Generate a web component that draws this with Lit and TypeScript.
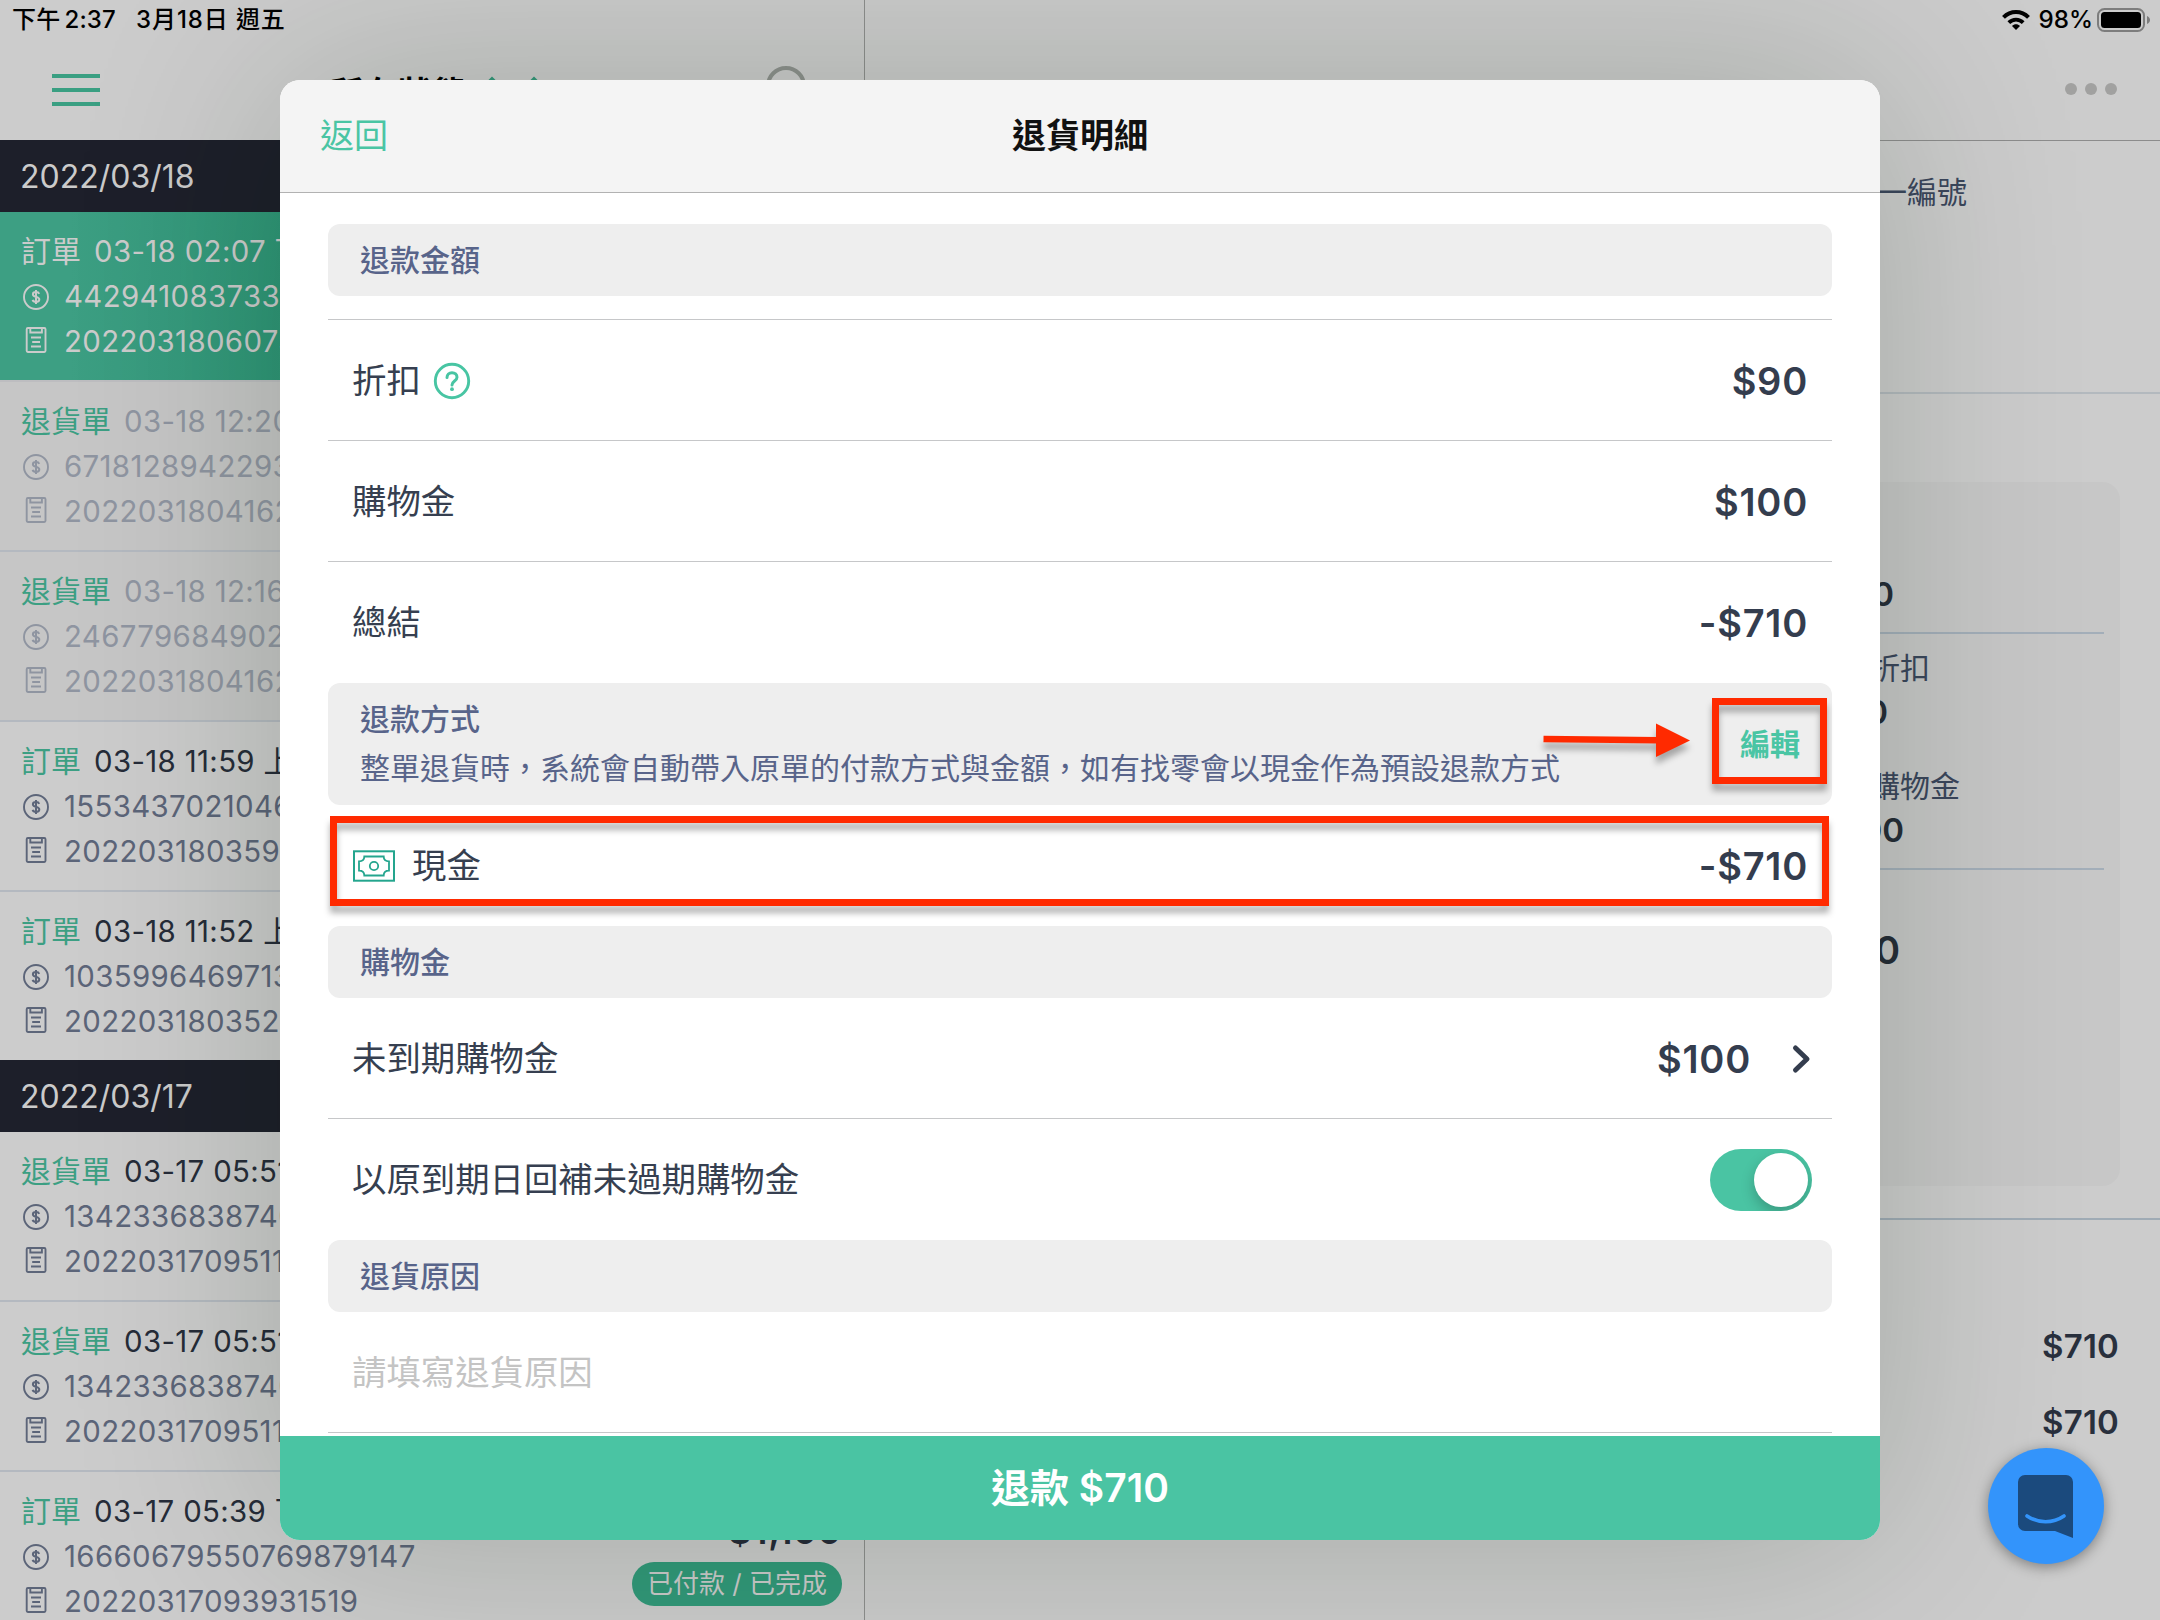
import { LitElement, html, css, nothing } from "lit";
import { customElement } from "lit/decorators.js";
import { classMap } from "lit/directives/class-map.js";

interface Order {
  kind: string;
  time: string;
  serial: string;
  invoice: string;
  state?: "selected" | "void";
  total?: string;
  badge?: string;
}

const groups: { date: string; orders: Order[] }[] = [
  {
    date: "2022/03/18",
    orders: [
      { kind: "訂單", time: "03-18 02:07 下午", serial: "442941083733", invoice: "2022031806073", state: "selected" },
      { kind: "退貨單", time: "03-18 12:20", serial: "6718128942293", invoice: "2022031804162", state: "void" },
      { kind: "退貨單", time: "03-18 12:16", serial: "246779684902", invoice: "2022031804162", state: "void" },
      { kind: "訂單", time: "03-18 11:59 上午", serial: "1553437021046", invoice: "2022031803595" },
      { kind: "訂單", time: "03-18 11:52 上午", serial: "1035996469713", invoice: "2022031803520" },
    ],
  },
  {
    date: "2022/03/17",
    orders: [
      { kind: "退貨單", time: "03-17 05:51", serial: "1342336838740", invoice: "2022031709511" },
      { kind: "退貨單", time: "03-17 05:51", serial: "1342336838740", invoice: "2022031709511" },
      {
        kind: "訂單", time: "03-17 05:39 下午", serial: "16660679550769879147", invoice: "20220317093931519",
        total: "$1,100", badge: "已付款 / 已完成",
      },
    ],
  },
];

const coinIcon = html`<svg class="ico" viewBox="0 0 30 30" width="30" height="30" fill="none" stroke="currentColor">
  <circle cx="15" cy="15" r="12" stroke-width="1.9" />
  <path d="M18.2 11.8c-.4-1.1-1.600-1.700-3.200-1.700-1.900 0-3.100.9-3.100 2.300 0 3.300 6.400 1.700 6.400 5 0 1.500-1.300 2.400-3.300 2.400-1.800 0-3-.7-3.400-1.900M15 8v14" stroke-width="2" />
</svg>`;

const slipIcon = html`<svg class="ico slip" viewBox="0 0 30 30" width="30" height="30" fill="none" stroke="currentColor" stroke-width="1.9">
  <rect x="5.700" y="3" width="18.800" height="24" rx="1.2" />
  <path d="M9.300 3v4.500h11.600V3M10 12.500h10M11.200 17h7.800M10 21.500h10" />
</svg>`;

@customElement("order-list")
class OrderList extends LitElement {
  static styles = css`
    :host { display: flex; flex-direction: column; width: 864px; flex: none; }
    .date { height: 72px; flex: none; box-sizing: border-box; padding: 0 20px; background: #1d1f2a; color: #cbcbcb;
      font-size: 32px; line-height: 73px; }
    .order { height: 170px; flex: none; box-sizing: border-box; padding: 17px 22px 0 21px; display: flex;
      justify-content: space-between; border-bottom: 2px solid #b4b9c0; background: #cccccc; color: #5c6579; }
    .order.last { height: 168px; border-bottom: none; }
    .order.void { background: #c6c6c6; color: #8f95a1; }
    .order.selected { background: linear-gradient(90deg, #3d9f83 8%, #2f9677 33%); color: #cbcbcb; border-color: #bdbdc0; }
    .line { display: flex; align-items: center; height: 45px; font-size: 29.4px; line-height: 45px; letter-spacing: .35px; white-space: nowrap; }
    .kind { color: #3c9f83; font-size: 30px; letter-spacing: 0; margin-right: 13px; }
    .time { color: #262c39; }
    .void .time { color: inherit; }
    .selected .kind, .selected .time { color: inherit; }
    .ico { margin-right: 13px; }
    .slip { margin-bottom: 4px; }
    .side { display: flex; flex-direction: column; align-items: flex-end; padding-top: 20px; }
    .total { font-size: 36px; font-weight: 600; line-height: 44px; color: #262c39; letter-spacing: .7px; }
    .badge { margin-top: 9px; height: 44px; width: 210px; border-radius: 22px; background: #32997a; color: #cbcbcb;
      font-size: 26px; line-height: 44px; text-align: center; white-space: nowrap; }
  `;

  render() {
    return groups.map(g => html`
      <div class="date">${g.date}</div>
      ${g.orders.map((o, i) => html`
        <div class=${classMap({ order: true, void: o.state === "void", selected: o.state === "selected", last: i === g.orders.length - 1 })}>
          <div>
            <div class="line"><span class="kind">${o.kind}</span><span class="time">${o.time}</span></div>
            <div class="line">${coinIcon}${o.serial}</div>
            <div class="line">${slipIcon}${o.invoice}</div>
          </div>
          ${o.badge ? html`<div class="side"><div class="total">${o.total}</div><div class="badge">${o.badge}</div></div>` : nothing}
        </div>`)}
    `);
  }
}

@customElement("order-detail")
class OrderDetail extends LitElement {
  static styles = css`
    :host { display: flex; flex-direction: column; flex: 1; border-top: 1px solid #8c8c8c; color: #3b465c; font-size: 30px; }
    .info { height: 253px; box-sizing: border-box; border-bottom: 2px solid #b3b9be; padding: 29px 193px 0 0; text-align: right; line-height: 44px; }
    .summary { height: 826px; box-sizing: border-box; border-bottom: 2px solid #9fabb5; padding: 88px 40px 0 40px; }
    .card { height: 704px; box-sizing: border-box; border-radius: 18px; background: #c7c7c7; padding: 90px 16px 0 0; }
    .group { border-bottom: 2px solid #a3aeb9; margin-left: 40px; }
    .entry { text-align: right; line-height: 44px; height: 44px; white-space: nowrap; }
    .value { color: #262d38; font-weight: 600; font-size: 33px; }
    .value.big { font-size: 38px; }
    .g1 { height: 60px; }
    .g2 { height: 234px; display: flex; flex-direction: column; }
    .g2 .entry:nth-child(odd) { margin-top: 12px; }
    .g2 .entry:nth-child(3) { margin-top: 30px; }
    .sumrow { margin: 58px 0 0 40px; }
    .totals { padding: 104px 41px 0 0; display: flex; flex-direction: column; gap: 32px; align-items: flex-end; }
    .totals .value { line-height: 44px; color: #29303d; letter-spacing: .2px; }
  `;

  /* Widths are the distance between the card's inner edge and the end of each entry. */
  private entry(text: string, width: number, cls = "") {
    return html`<div class="entry ${cls}" style="width:${width}px">${text}</div>`;
  }

  render() {
    return html`
      <div class="info">統一編號</div>
      <div class="summary">
        <div class="card">
          <div class="group g1">${this.entry("$800", 949, "value")}</div>
          <div class="group g2">
            ${this.entry("折扣", 985)}${this.entry("$90", 943, "value")}
            ${this.entry("購物金", 1015)}${this.entry("$100", 959, "value")}
          </div>
          <div class="sumrow">${this.entry("$710", 955, "value big")}</div>
        </div>
      </div>
      <div class="totals"><div class="value">$710</div><div class="value">$710</div></div>
    `;
  }
}

@customElement("refund-sheet")
class RefundSheet extends LitElement {
  static styles = css`
    :host { display: flex; flex-direction: column; width: 1600px; height: 1460px; border-radius: 20px; background: #fff;
      overflow: hidden; color: #363f50; font-size: 34.4px; }
    header { height: 113px; box-sizing: border-box; flex: none; display: grid; grid-template-columns: 1fr auto 1fr; align-items: center;
      padding: 1px 40px 0; background: #f4f4f4; border-bottom: 1px solid #b2b2b2; font-size: 34px; }
    .back { color: #4ac5a4; }
    .title { color: #111; font-weight: 600; }
    .body { flex: 1; padding: 31px 48px 0; overflow: hidden; min-height: 0; }
    .section { height: 72px; box-sizing: border-box; display: flex; align-items: center; justify-content: space-between;
      padding: 0 32px; border-radius: 12px; background: #eeeeee; color: #58648a; font-size: 30px; }
    .section.first { margin-bottom: 23px; }
    .section.tall { height: 122px; margin-top: 1px; }
    .section b { font-weight: 500; display: block; }
    .tall b, .tall p { margin: 0; line-height: 49px; white-space: nowrap; }
    .edit { color: #4ac5a4; font-weight: 600; }
    .row { height: 121px; box-sizing: border-box; display: flex; align-items: center; padding: 1px 24px 0 24px; line-height: 44px; }
    .row.top { border-top: 1px solid #c6c7c9; }
    .row.bottom { border-bottom: 1px solid #c6c7c9; padding-top: 2px; }
    .amount { margin-left: auto; font-size: 38px; font-weight: 600; letter-spacing: .75px; color: #343d4e; }
    .help { margin: 0 0 0 12px; }
    .cash { margin: 0 17px 0 1px; }
    .go { margin: 0 -9px 0 36px; }
    .switch { margin: 0 -4px 0 auto; width: 102px; height: 62px; border-radius: 31px; background: #4ac4a3; display: flex;
      justify-content: flex-end; padding: 4px; box-sizing: border-box; overflow: hidden; }
    .knob { width: 54px; height: 54px; border-radius: 50%; background: #fff; box-shadow: 0 6px 14px rgba(0, 0, 0, .22); }
    .placeholder { color: #c4c4c4; }
    footer { height: 104px; flex: none; background: #4ac4a3; color: #fff; font-size: 39px; font-weight: 600; text-align: center; line-height: 104px; }
  `;

  render() {
    return html`
      <header><span class="back">返回</span><span class="title">退貨明細</span></header>
      <div class="body">
        <div class="section first"><b>退款金額</b></div>
        <div class="row top">折扣
          <svg class="help" width="38" height="38" viewBox="0 0 38 38" fill="none" stroke="#48c5a3" stroke-width="2.900">
            <circle cx="19" cy="19" r="16.700" />
            <path d="M14 15.600c0-3 2.100-4.900 5-4.900s5 1.800 5 4.500c0 3.900-5 3.700-5 7.800" stroke-linecap="round" stroke-width="3" />
            <circle cx="19" cy="27.200" r="1.900" fill="#48c5a3" stroke="none" />
          </svg>
          <span class="amount">$90</span>
        </div>
        <div class="row top">購物金<span class="amount">$100</span></div>
        <div class="row top">總結<span class="amount">-$710</span></div>
        <div class="section tall">
          <div><b>退款方式</b><p>整單退貨時，系統會自動帶入原單的付款方式與金額，如有找零會以現金作為預設退款方式</p></div>
          <span class="edit">編輯</span>
        </div>
        <div class="row">
          <svg class="cash" width="42" height="32" viewBox="0 0 42 32" fill="none" stroke="#24a58e" stroke-width="1.800">
            <rect x="1" y="1.300" width="40" height="29.400" stroke-width="2" />
            <path d="M11.300 6.500h19.400c0 3 1.700 4.800 5.300 4.800v9.400c-3.600 0-5.300 1.800-5.300 4.800H11.300c0-3-1.700-4.800-5.300-4.800v-9.400c3.600 0 5.300-1.800 5.300-4.800z" />
            <circle cx="21" cy="16" r="4.200" />
          </svg>現金<span class="amount">-$710</span>
        </div>
        <div class="section"><b>購物金</b></div>
        <div class="row bottom">未到期購物金<span class="amount">$100</span>
          <svg class="go" width="30" height="38" viewBox="0 0 30 38" fill="none" stroke="#343d4e" stroke-width="5" stroke-linecap="round" stroke-linejoin="round">
            <path d="M8.500 8l11.500 11-11.500 11" />
          </svg>
        </div>
        <div class="row">以原到期日回補未過期購物金<span class="switch"><span class="knob"></span></span></div>
        <div class="section"><b>退貨原因</b></div>
        <div class="row bottom placeholder">請填寫退貨原因</div>
      </div>
      <footer>退款 $710</footer>
    `;
  }
}

@customElement("app-root")
class AppRoot extends LitElement {
  static styles = css`
    :host { display: block; position: relative; width: 2160px; height: 1620px; overflow: hidden; background: #cccccc;
      font-family: Inter, "Noto Sans CJK TC", sans-serif; font-size: 30px; line-height: 1.2; }
    .screen { height: 1620px; display: flex; }
    .left { width: 864px; flex: none; display: flex; flex-direction: column; border-right: 1px solid #8e8f8e; height: 1620px; overflow: hidden; }
    .right { flex: 1; display: flex; flex-direction: column; }
    .status { height: 40px; flex: none; display: flex; align-items: center; font-size: 24px; font-weight: 500; color: #000; white-space: nowrap; }
    .left .status { padding-left: 12px; gap: 20px; letter-spacing: .2px; }
    .clock i { font-style: normal; margin-left: 4px; }
    .day { letter-spacing: .9px; }
    .right .status { justify-content: flex-end; padding-right: 9px; }
    .percent { font-size: 24.2px; }
    .wifi { margin-right: 9px; }
    .battery { margin-left: 4px; }
    .bar { height: 100px; flex: none; display: flex; align-items: center; }
    .left .bar { padding-left: 52px; }
    .filter { margin: 7px 0 0 229px; font-size: 34.4px; font-weight: 600; color: #000; white-space: nowrap; }
    .caret { margin-left: 19px; }
    .search { margin-left: 224px; }
    .right .bar { justify-content: flex-end; padding-right: 43px; gap: 8px; box-sizing: border-box; }
    .dot { width: 12px; height: 12px; border-radius: 50%; background: #a1a1a0; margin-bottom: 2px; }
    .sheet { position: absolute; left: 280px; top: 80px; border-radius: 20px; box-shadow: 0 0 210px rgba(8, 32, 0, .2); }
    .chat { position: absolute; left: 1988px; top: 1448px; width: 116px; height: 116px; border-radius: 50%; background: #3394fb;
      box-shadow: 0 3px 14px rgba(0, 0, 0, .38); }
    .marks { position: absolute; left: 0; top: 0; filter: drop-shadow(0 7px 3px rgba(0, 0, 0, .3)); }
  `;

  render() {
    return html`
      <div class="screen">
        <div class="left">
          <div class="status"><span class="clock">下午<i>2:37</i></span><span class="day">3月18日 週五</span></div>
          <div class="bar">
            <svg width="48" height="32" viewBox="0 0 48 32"><path d="M0 2h48M0 16h48M0 30h48" stroke="#3a9f82" stroke-width="4" /></svg>
            <span class="filter">所有狀態</span>
            <svg class="caret" width="54" height="36" viewBox="0 0 54 36" fill="none" stroke="#35987b" stroke-width="5" stroke-linecap="square"><path d="M6 8l21 21 21-21" /></svg>
            <svg class="search" width="52" height="52" viewBox="0 0 52 52" fill="none" stroke="#8e928e" stroke-width="4"><circle cx="22" cy="22" r="18" /><path d="M35 35l13 13" /></svg>
          </div>
          <order-list></order-list>
        </div>
        <div class="right">
          <div class="status">
            <svg class="wifi" width="28" height="22" viewBox="0 0 28 22" fill="none" stroke="#000">
              <path d="M1.500 8.300c7-7.100 18-7.100 25 0" stroke-width="4" />
              <path d="M6.800 13.600c4.100-4.100 10.300-4.100 14.400 0" stroke-width="3.800" />
              <path d="M14 21l-4-4c2.200-2.300 5.800-2.300 8 0z" fill="#000" stroke="none" />
            </svg>
            <span class="percent">98%</span>
            <svg class="battery" width="54" height="24" viewBox="0 0 54 24">
              <rect x="1" y="1" width="46" height="22" rx="6.500" fill="none" stroke="#7d7d7d" stroke-width="2" />
              <rect x="4" y="4" width="40" height="16" rx="3.500" />
              <path d="M50 8c4 1.500 4 6.500 0 8z" fill="#7d7d7d" />
            </svg>
          </div>
          <div class="bar"><span class="dot"></span><span class="dot"></span><span class="dot"></span></div>
          <order-detail></order-detail>
        </div>
      </div>
      <refund-sheet class="sheet"></refund-sheet>
      <svg class="marks" width="2160" height="1620" viewBox="0 0 2160 1620" fill="none" stroke="#ff2a00">
        <rect x="1715.500" y="701.500" width="108" height="79" stroke-width="7" />
        <rect x="333.500" y="819.500" width="1492" height="83" stroke-width="7" />
        <path d="M1543.500 739L1658 740.300" stroke-width="6.500" />
        <path d="M1656 723.500v33.500l34-16.500z" fill="#ff2a00" stroke="none" />
      </svg>
      <div class="chat">
        <svg width="116" height="116" viewBox="0 0 116 116">
          <path d="M37 27h41a7 7 0 0 1 7 7v56L67 83H37a7 7 0 0 1-7-7V34a7 7 0 0 1 7-7z" fill="#1b4a7d" />
          <path d="M39 68c11 7.600 26 7.600 37 0" fill="none" stroke="#3394fb" stroke-width="3.600" stroke-linecap="round" />
        </svg>
      </div>
    `;
  }
}
